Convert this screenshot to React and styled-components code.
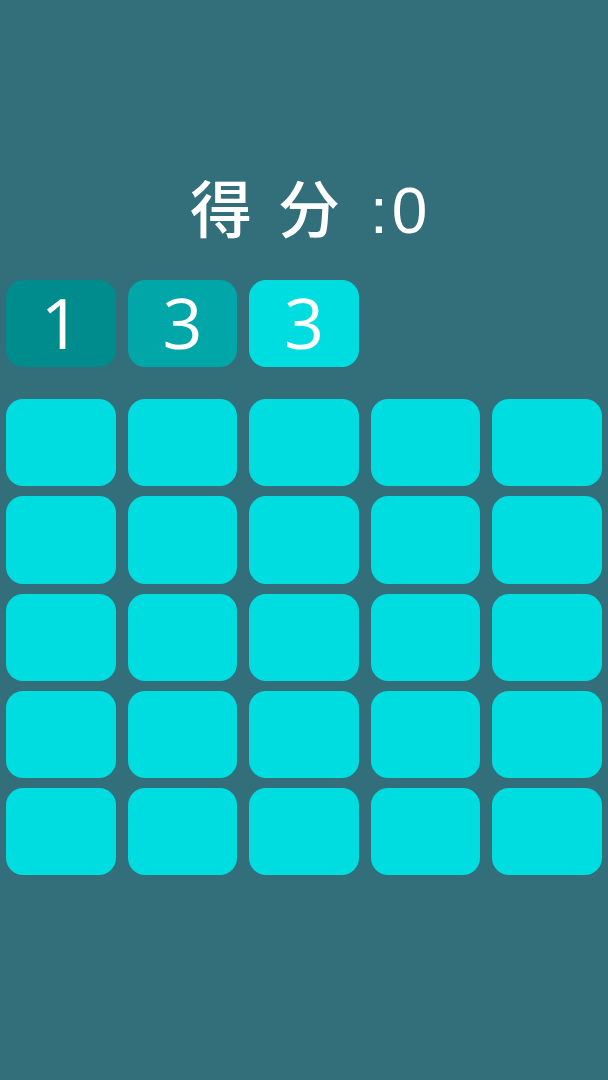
import { createGlobalStyle } from "styled-components";
import styled from "styled-components";

const sequence = [
  { value: 1, shade: "#008b8c" },
  { value: 3, shade: "#00a6a8" },
  { value: 3, shade: "#00dde0" },
];
const board = Array.from({ length: 25 }, (_, i) => i);

function App() {
  return (
    <>
      <GlobalStyle />
      <Page>
        <Score>
          <ScoreLabel>得分</ScoreLabel>
          <ScoreValue>:0</ScoreValue>
        </Score>
        <SequenceRow>
          {sequence.map((item, i) => (
            <Tile key={i} $shade={item.shade}>
              {item.value}
            </Tile>
          ))}
        </SequenceRow>
        <Board>
          {board.map((i) => (
            <Tile key={i} $shade="#00dde0" />
          ))}
        </Board>
      </Page>
    </>
  );
}

export default App;

const GlobalStyle = createGlobalStyle`
  html, body {
    margin: 0;
    padding: 0;
    background: #336e7b;
  }
`;

const Page = styled.div`
  width: 608px;
  height: 1080px;
  overflow: hidden;
  padding: 0 6px;
  box-sizing: border-box;
  background: #336e7b;
  display: flex;
  flex-direction: column;
`;

const Score = styled.div`
  height: 280px;
  box-sizing: border-box;
  padding: 166px 0 0 184px;
  display: flex;
  align-items: flex-start;
  color: #fff;
  font-family: "Noto Sans CJK SC", "Noto Sans", sans-serif;
  font-size: 62px;
  line-height: 80px;
`;

const ScoreLabel = styled.span`
  letter-spacing: 26px;
  font-weight: 500;
`;

const ScoreValue = styled.span`
  font-family: "Liberation Sans", sans-serif;
  font-size: 64px;
  letter-spacing: 4px;
  margin: 5px 0 0 4px;
`;

const SequenceRow = styled.div`
  display: grid;
  grid-template-columns: repeat(5, 1fr);
  grid-auto-rows: 87.2px;
  column-gap: 12px;
  margin-bottom: 32px;
`;

const Board = styled.div`
  display: grid;
  grid-template-columns: repeat(5, 1fr);
  grid-auto-rows: 87.2px;
  gap: 10px 12px;
`;

const Tile = styled.div`
  display: flex;
  align-items: center;
  justify-content: center;
  padding-bottom: 4px;
  box-sizing: border-box;
  border-radius: 17px;
  background: ${(p) => p.$shade};
  color: #fff;
  font-family: "Open Sans", "Liberation Sans", sans-serif;
  font-size: 70px;
  font-weight: 400;
`;
